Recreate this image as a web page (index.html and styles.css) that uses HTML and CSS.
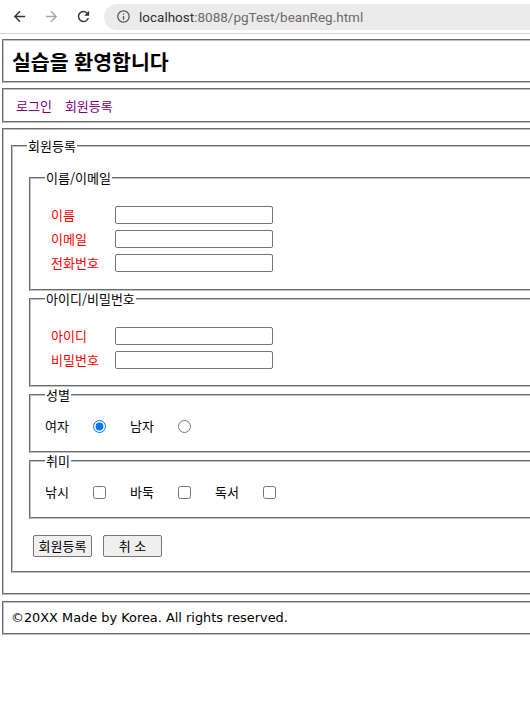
FILE: index.html
```html
<!DOCTYPE html>
<html lang="ko">
<head>
<meta charset="utf-8">
<title>beanReg</title>
<link rel="stylesheet" href="styles.css">
</head>
<body>
<div class="toolbar">
  <svg class="tb-icon" viewBox="0 0 24 24"><path d="M20 11H7.83l5.59-5.59L12 4l-8 8 8 8 1.41-1.41L7.83 13H20v-2z"/></svg>
  <svg class="tb-icon disabled" viewBox="0 0 24 24"><path d="M4 11h12.17l-5.59-5.59L12 4l8 8-8 8-1.41-1.41L16.17 13H4v-2z"/></svg>
  <svg class="tb-icon reload" viewBox="0 0 24 24"><path d="M17.65 6.35A7.958 7.958 0 0 0 12 4c-4.42 0-7.99 3.58-7.99 8s3.57 8 7.99 8c3.73 0 6.84-2.55 7.730-6h-2.08A5.99 5.99 0 0 1 12 18c-3.31 0-6-2.69-6-6s2.69-6 6-6c1.66 0 3.14.69 4.22 1.78L13 11h7V4l-2.35 2.35z"/></svg>
  <div class="omnibox">
    <svg class="info" viewBox="0 0 24 24"><path d="M11 7h2v2h-2zm0 4h2v6h-2zm1-9C6.48 2 2 6.48 2 12s4.48 10 10 10 10-4.48 10-10S17.52 2 12 2zm0 18c-4.41 0-8-3.59-8-8s3.59-8 8-8 8 3.59 8 8-3.59 8-8 8z"/></svg>
    <span class="host">localhost</span><span class="path">:8088/pgTest/beanReg.html</span>
  </div>
</div>
<div class="page">
  <header class="box head"><h1>실습을 환영합니다</h1></header>
  <nav class="box nav"><a href="#">로그인</a><a href="#">회원등록</a></nav>
  <main class="box main">
    <form>
      <fieldset class="outer">
        <legend>회원등록</legend>
        <fieldset class="group first">
          <legend>이름/이메일</legend>
          <div class="fields">
            <label>이름</label><input type="text">
            <label>이메일</label><input type="text">
            <label>전화번호</label><input type="text">
          </div>
        </fieldset>
        <fieldset class="group">
          <legend>아이디/비밀번호</legend>
          <div class="fields">
            <label>아이디</label><input type="text">
            <label>비밀번호</label><input type="password">
          </div>
        </fieldset>
        <fieldset class="group">
          <legend>성별</legend>
          <div class="choices">
            <label class="choice"><span>여자</span><input type="radio" name="gender" checked></label>
            <label class="choice"><span>남자</span><input type="radio" name="gender"></label>
          </div>
        </fieldset>
        <fieldset class="group">
          <legend>취미</legend>
          <div class="choices">
            <label class="choice"><span>낚시</span><input type="checkbox"></label>
            <label class="choice"><span>바둑</span><input type="checkbox"></label>
            <label class="choice"><span>독서</span><input type="checkbox"></label>
          </div>
        </fieldset>
        <div class="buttons">
          <button type="submit">회원등록</button>
          <button type="reset">취 소</button>
        </div>
      </fieldset>
    </form>
  </main>
  <footer class="box foot">©20XX Made by Korea. All rights reserved.</footer>
</div>
</body>
</html>
```
FILE: styles.css
```css
html, body {
  margin: 0;
  padding: 0;
  overflow: hidden;
  background: #fff;
}
body {
  width: 530px;
  height: 719px;
  font-family: "Noto Sans CJK KR", sans-serif;
  font-size: 13px;
  line-height: 16px;
  color: #000;
}

/* browser toolbar */
.toolbar {
  height: 33px;
  border-bottom: 1px solid #d4d4d4;
  display: flex;
  align-items: center;
  padding-left: 11px;
  background: #fff;
}
.tb-icon {
  width: 17px;
  height: 17px;
  margin-right: 15px;
  fill: #333;
  flex: none;
}
.tb-icon.disabled { fill: #a6a6a6; }
.tb-icon.reload { margin-right: 12px; }
.omnibox {
  flex: 1;
  height: 26px;
  border-radius: 13px 0 0 13px;
  background: #ebebeb;
  display: flex;
  align-items: center;
  padding-left: 12px;
  font-family: Roboto, "Liberation Sans", sans-serif;
  font-size: 13.5px;
  font-weight: 400;
  white-space: nowrap;
}
.info {
  width: 15px;
  height: 15px;
  fill: #555;
  margin-right: 8px;
  flex: none;
}
.host { color: #303134; }
.path { color: #6a6a6a; }

/* page */
.page {
  padding: 5px 0 0 2px;
}
.box {
  width: 620px;
  box-sizing: border-box;
  border: 2px groove #c0c0c0;
}
.head {
  height: 44px;
  padding-left: 8px;
  display: flex;
  align-items: center;
}
.head h1 {
  margin: 0;
  font-size: 20.5px;
  line-height: 24px;
  font-weight: bold;
}
.nav {
  margin-top: 5px;
  height: 35px;
  padding-left: 12px;
  display: flex;
  align-items: center;
  gap: 13px;
}
.nav a {
  color: #800080;
  text-decoration: none;
}
.main {
  margin-top: 5px;
}
.foot {
  margin-top: 6px;
  height: 34px;
  padding-left: 7px;
  display: flex;
  align-items: center;
  font-family: "DejaVu Sans", Verdana, sans-serif;
  font-size: 12.9px;
}

fieldset {
  margin: 0;
  padding: 0 16px 16px;
  border: 2px groove #c0c0c0;
  min-width: 0;
}
legend {
  padding: 0 1px;
  margin-left: -2px;
  line-height: 16px;
  font-size: 13px;
}
.outer {
  margin: 8px 0 20px 7px;
  padding-bottom: 14px;
}
.group.first {
  margin-top: 16px;
  padding-bottom: 17px;
}

.fields {
  display: grid;
  grid-template-columns: 64px 158px;
  row-gap: 6px;
  align-items: center;
  margin: 20px 0 0 4px;
}
.fields label {
  color: #ff0000;
  line-height: 18px;
}
.fields input {
  width: 158px;
  height: 18px;
  box-sizing: border-box;
  margin: 0;
  padding: 0 2px;
  border: 1px solid #767676;
  border-radius: 2px;
  background: #fff;
}

.choices {
  display: flex;
  height: 18px;
  align-items: center;
  margin: 14px 0 0 -2px;
}
.choice {
  display: flex;
  align-items: center;
  width: 85px;
  line-height: 18px;
}
.choice span {
  width: 48px;
}
.choice input {
  margin: 0;
  width: 13px;
  height: 13px;
}

.buttons {
  display: flex;
  gap: 11px;
  margin: 16px 0 0 4px;
}
.buttons button {
  width: 59px;
  height: 22px;
  padding: 0;
  margin: 0;
  border: 1px solid #767676;
  border-radius: 2px;
  background: #efefef;
  font-family: "Noto Sans CJK KR", sans-serif;
  font-size: 13px;
  line-height: 18px;
  color: #000;
}
```
